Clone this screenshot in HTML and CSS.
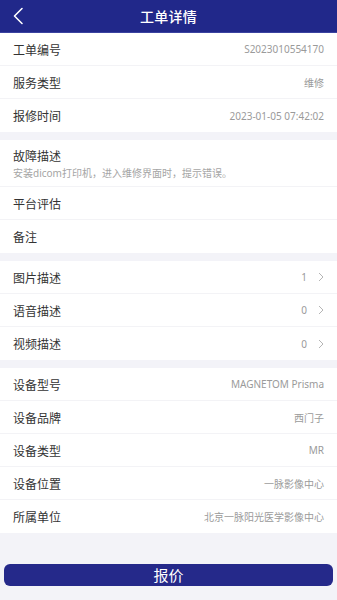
FILE: index.html
```html
<!DOCTYPE html>
<html lang="zh-CN">
<head>
<meta charset="utf-8">
<meta name="viewport" content="width=device-width, initial-scale=1">
<link rel="stylesheet" href="styles.css">
<title>工单详情</title>
</head>
<body>
<div class="page">
  <header class="topbar">
    <svg class="back" width="12" height="18" viewBox="0 0 12 18"><path d="M10 1.5 L2.5 9 L10 16.5" fill="none" stroke="#fff" stroke-width="1.6" stroke-linecap="round" stroke-linejoin="round"/></svg>
    <div class="title">工单详情</div>
  </header>

  <section class="group">
    <div class="row"><span class="label">工单编号</span><span class="value">S2023010554170</span></div>
    <div class="row"><span class="label">服务类型</span><span class="value">维修</span></div>
    <div class="row"><span class="label">报修时间</span><span class="value">2023-01-05 07:42:02</span></div>
  </section>

  <section class="group">
    <div class="row tall">
      <span class="label">故障描述</span>
      <span class="desc">安装dicom打印机，进入维修界面时，提示错误。</span>
    </div>
    <div class="row"><span class="label">平台评估</span></div>
    <div class="row"><span class="label">备注</span></div>
  </section>

  <section class="group">
    <div class="row"><span class="label">图片描述</span><span class="value link">1<svg class="chev" width="6" height="10" viewBox="0 0 6 10"><path d="M1 1 L5 5 L1 9" fill="none" stroke="#b5b5b5" stroke-width="1"/></svg></span></div>
    <div class="row"><span class="label">语音描述</span><span class="value link">0<svg class="chev" width="6" height="10" viewBox="0 0 6 10"><path d="M1 1 L5 5 L1 9" fill="none" stroke="#b5b5b5" stroke-width="1"/></svg></span></div>
    <div class="row"><span class="label">视频描述</span><span class="value link">0<svg class="chev" width="6" height="10" viewBox="0 0 6 10"><path d="M1 1 L5 5 L1 9" fill="none" stroke="#b5b5b5" stroke-width="1"/></svg></span></div>
  </section>

  <section class="group">
    <div class="row"><span class="label">设备型号</span><span class="value">MAGNETOM Prisma</span></div>
    <div class="row"><span class="label">设备品牌</span><span class="value">西门子</span></div>
    <div class="row"><span class="label">设备类型</span><span class="value">MR</span></div>
    <div class="row"><span class="label">设备位置</span><span class="value">一脉影像中心</span></div>
    <div class="row"><span class="label">所属单位</span><span class="value">北京一脉阳光医学影像中心</span></div>
  </section>

  <div class="footer">
    <button class="btn">报价</button>
  </div>
</div>
</body>
</html>
```

FILE: styles.css
```css
* { box-sizing: border-box; margin: 0; padding: 0; }
html, body { background: #f3f3f8; }
body {
  font-family: "Noto Sans", "Noto Sans CJK SC", sans-serif;
  width: 337px;
  height: 600px;
  overflow: hidden;
}
.page { display: flex; flex-direction: column; }
.topbar {
  height: 33px;
  background: #21288a;
  display: flex;
  align-items: center;
  justify-content: center;
  position: relative;
  border-bottom: 1px solid #3b43a0;
}
.back { position: absolute; left: 12px; top: 7px; }
.title {
  color: #fff;
  font-size: 14px;
  font-family: "Noto Sans CJK SC", sans-serif;
  font-weight: 500;
  letter-spacing: 0.3px;
}
.group {
  background: #fff;
  display: flex;
  flex-direction: column;
}
.group + .group { margin-top: 8px; }
.row {
  height: 33px;
  display: flex;
  align-items: center;
  justify-content: space-between;
  padding: 0 13px;
  border-bottom: 1px solid #f3f3f6;
}
.row:last-child { border-bottom: none; }
.row.tall {
  height: 47px;
  flex-direction: column;
  align-items: flex-start;
  justify-content: center;
  gap: 1px;
}
.label {
  font-size: 12px;
  color: #333;
  font-family: "Noto Sans CJK SC", sans-serif;
}
.value {
  font-size: 10px;
  color: #9a9a9a;
  font-family: "Noto Sans", "Noto Sans CJK SC", sans-serif;
}
.desc {
  font-size: 10px;
  color: #a5a5a5;
  font-family: "Noto Sans", "Noto Sans CJK SC", sans-serif;
}
.link { display: flex; align-items: center; gap: 11px; }
.chev { display: block; }
.footer {
  padding: 31px 4px 0 4px;
}
.btn {
  width: 100%;
  height: 22px;
  border: none;
  border-radius: 6px;
  background: #25298a;
  color: #fff;
  font-family: "Noto Sans CJK SC", sans-serif;
  font-size: 15px;
  line-height: 22px;
}
```
